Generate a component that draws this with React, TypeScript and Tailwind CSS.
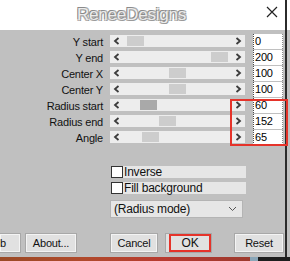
import React from "react";

const rows = [
  { label: "Y start", value: "0", thumb: 17, active: false },
  { label: "Y end", value: "200", thumb: 101, active: false },
  { label: "Center X", value: "100", thumb: 59, active: false },
  { label: "Center Y", value: "100", thumb: 59, active: false },
  { label: "Radius start", value: "60", thumb: 30, active: true },
  { label: "Radius end", value: "152", thumb: 49, active: false },
  { label: "Angle", value: "65", thumb: 32, active: false },
];

const Chevron = ({ dir }: { dir: "left" | "right" }) => (
  <svg width="7" height="8" viewBox="0 0 7 8" className="shrink-0">
    <path
      d={dir === "left" ? "M5.5 1 L2 4 L5.5 7" : "M1.5 1 L5 4 L1.5 7"}
      fill="none"
      stroke="#3c3c3c"
      strokeWidth="1.8"
    />
  </svg>
);

const Button = ({ label, className = "" }: { label: string; className?: string }) => (
  <div
    className={`h-[20px] flex items-center justify-center bg-[#e1e1e1] border border-[#a8a8a8] shadow-[inset_0_0_0_1px_#f4f4f4] text-[11px] text-[#111] ${className}`}
  >
    {label}
  </div>
);

export default function App() {
  return (
    <div className="w-[290px] h-[261px] overflow-hidden flex flex-col font-['Liberation_Sans',Arial,sans-serif] select-none">
      <div className="flex h-[257px]">
        {/* DIALOG */}
        <div className="w-[285px] flex flex-col">
          {/* TITLE */}
          <div className="h-[30px] bg-white flex items-center relative">
            <span className="pl-[77px] text-[17px] text-[#ececec] tracking-[-0.2px] [text-shadow:-1px_-1px_0_#8a8a8a,1px_1px_0_#9a9a9a,1px_-1px_0_#b0b0b0,-1px_1px_0_#b0b0b0]">
              ReneeDesigns
            </span>
            <svg width="12" height="12" viewBox="0 0 12 12" className="absolute left-[266px] top-[6px]">
              <path d="M1 1 L11 11 M11 1 L1 11" stroke="#222" strokeWidth="1.2" />
            </svg>
          </div>
          {/* BODY */}
          <div className="flex-1 bg-[#c0c0c0] relative flex flex-col pt-[3px] text-[11px] tracking-[-0.2px] text-[#111]">
            {rows.map((r) => (
              <div key={r.label} className="h-[16px] flex items-center">
                <span className="w-[103px] text-right leading-none mt-[3px]">{r.label}</span>
                <div className="ml-[7px] w-[135px] h-[12px] bg-[#ededed] relative flex items-center justify-between px-[3px]">
                  <Chevron dir="left" />
                  <div
                    className={`absolute top-[1px] h-[10px] w-[17px] ${r.active ? "bg-[#a9a9a9]" : "bg-[#cdcdcd]"}`}
                    style={{ left: r.thumb }}
                  />
                  <Chevron dir="right" />
                </div>
                <div className="ml-[8px] w-[30px] h-[15px] bg-white border-l border-[#4a4a4a] border-r border-r-[#8a8a8a] border-dotted pl-[1px] flex items-center leading-none text-black">
                  {r.value}
                </div>
              </div>
            ))}

            {/* CHECKBOXES */}
            <div className="mt-[21px] ml-[111px] flex flex-col gap-[4px]">
              {["Inverse", "Fill background"].map((t) => (
                <div key={t} className="flex items-center h-[12px]">
                  <div className="w-[12px] h-[12px] bg-white border border-[#333]" />
                  <div className="w-[123px] h-[12px] bg-[#e6e6e6] pl-[1px] flex items-center leading-none text-[12px]">
                    {t}
                  </div>
                </div>
              ))}
            </div>

            {/* DROPDOWN */}
            <div className="mt-[6px] ml-[110px] w-[133px] h-[18px] bg-[#e6e6e6] border border-[#b4b4b4] flex items-center justify-between pl-[3px] pr-[5px] text-[12px]">
              <span>(Radius mode)</span>
              <svg width="9" height="6" viewBox="0 0 9 6">
                <path d="M1 1 L4.5 4.5 L8 1" fill="none" stroke="#555" strokeWidth="1" />
              </svg>
            </div>

            {/* BUTTONS */}
            <div className="mt-[15px] flex items-center">
              <Button label="b" className="w-[21px] border-l-0 !justify-start pl-[0px]" />
              <Button label="About..." className="ml-[4px] w-[52px]" />
              <Button label="Cancel" className="ml-[33px] w-[48px]" />
              <div className="ml-[7px] w-[47px] h-[20px] border border-[#a8a8a8] bg-[#e1e1e1] pl-[3px]">
                <div className="h-full border-2 border-[#e5332a] flex items-center justify-center text-[12px]">OK</div>
              </div>
              <Button label="Reset" className="ml-[22px] w-[50px]" />
            </div>

            {/* RED HIGHLIGHT */}
            <div className="absolute left-[230px] top-[69px] w-[58px] h-[47px] border-2 border-[#e5332a]" />
          </div>
        </div>
        <div className="w-[2px] bg-[#2b2b2b]" />
        <div className="w-[3px] flex flex-col">
          <div className="h-[30px] bg-white" />
          <div className="flex-1 bg-[#c0c0c0]" />
        </div>
      </div>
      {/* DESKTOP STRIP */}
      <div className="h-[4px] flex">
        <div className="w-[250px] bg-[linear-gradient(90deg,#9a4a26,#b04a2c,#b83a30,#9c3a2e)]" />
        <div className="w-[8px] bg-[#8aa6b8]" />
        <div className="flex-1 bg-[#1e1e1e]" />
      </div>
    </div>
  );
}
